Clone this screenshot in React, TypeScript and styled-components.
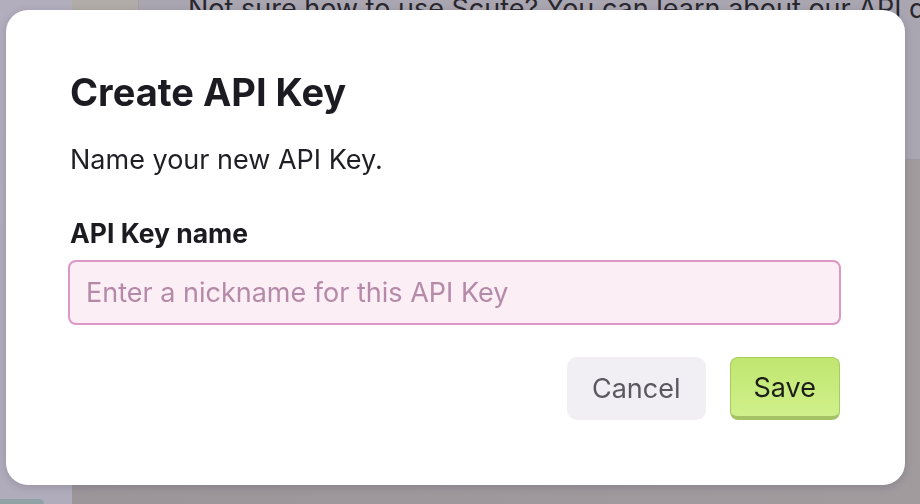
import React from 'react';
import styled, { createGlobalStyle } from 'styled-components';

const GlobalStyle = createGlobalStyle`
  html, body {
    margin: 0;
    padding: 0;
    height: 100%;
    overflow: hidden;
  }
  body {
    font-family: Inter, "Noto Sans", "Liberation Sans", sans-serif;
  }
  #root {
    height: 100%;
  }
`;

export default function App() {
  return (
    <>
      <GlobalStyle />
      <Page>
        <Sidebar>
          <SideChip />
        </Sidebar>
        <Main>
          <Header>
            <HeaderThumb />
            <HeaderText>
              Not sure how to use Scute? You can learn about our API docs here.
            </HeaderText>
          </Header>
          <Body />
        </Main>
      </Page>

      {/* Modal sits over the dimmed page */}
      <Modal role="dialog" aria-labelledby="create-key-title">
        <Title id="create-key-title">Create API Key</Title>
        <Description>Name your new API Key.</Description>
        <Label htmlFor="api-key-name">API Key name</Label>
        <Input id="api-key-name" placeholder="Enter a nickname for this API Key" />
        <Actions>
          <Button variant="secondary">Cancel</Button>
          <Button variant="primary">Save</Button>
        </Actions>
      </Modal>
    </>
  );
}

const Page = styled.div`
  display: grid;
  grid-template-columns: 72px 1fr;
  height: 100vh;
`;

const Sidebar = styled.aside`
  display: flex;
  flex-direction: column;
  justify-content: flex-end;
  background: linear-gradient(180deg, #b2aebd 0%, #b0acbb 100%);
`;

const SideChip = styled.div`
  width: 44px;
  height: 5px;
  background-color: #8fa2a6;
  border-top-right-radius: 10px;
`;

const Main = styled.main`
  display: flex;
  flex-direction: column;
  min-width: 0;
`;

const Header = styled.header`
  display: flex;
  height: 159px;
  flex-shrink: 0;
  overflow: hidden;
  background-color: #a9a6b2;
  border-bottom: 1px solid #9c99a6;
`;

const HeaderThumb = styled.div`
  width: 66px;
  flex-shrink: 0;
  background-color: #b2aca9;
  border-right: 1px solid #a29fa9;
`;

const HeaderText = styled.p`
  margin: -8px 0 0 49px;
  font-size: 27px;
  line-height: 34px;
  color: #29282e;
  white-space: nowrap;
`;

const Body = styled.div`
  flex: 1;
  background: linear-gradient(90deg, #9c959a 0%, #a19b9e 100%);
`;

const Modal = styled.div`
  position: fixed;
  left: 6px;
  top: 10px;
  width: 899px;
  height: 475px;
  box-sizing: border-box;
  display: flex;
  flex-direction: column;
  padding: 59px 64px 65px;
  background-color: #ffffff;
  border-radius: 22px;
  box-shadow: 0 2px 8px rgba(40, 30, 50, 0.18);
`;

const Title = styled.h2`
  margin: 0;
  font-size: 38px;
  line-height: 46px;
  font-weight: 700;
  color: #1c1b21;
`;

const Description = styled.p`
  margin: 28px 0 0;
  font-size: 27px;
  line-height: 34px;
  color: #1f1e24;
`;

const Label = styled.label`
  margin-top: 39px;
  font-size: 26.5px;
  line-height: 34px;
  font-weight: 700;
  color: #1c1b21;
`;

const Input = styled.input`
  margin: 10px 0 0 -2px;
  height: 65px;
  box-sizing: border-box;
  padding: 0 16px;
  font-family: inherit;
  font-size: 27px;
  color: #2a2230;
  background-color: #fbeef5;
  border: 2.5px solid #dc97c4;
  border-radius: 8px;
  outline: none;

  &::placeholder {
    color: #b58aa8;
  }
`;

const Actions = styled.div`
  display: flex;
  justify-content: flex-end;
  gap: 24px;
  margin-top: 32px;
`;

interface ButtonProps {
  variant: 'primary' | 'secondary';
}

const Button = styled.button<ButtonProps>`
  height: 63px;
  box-sizing: border-box;
  font-family: inherit;
  font-size: 27px;
  cursor: pointer;
  ${({ variant }) =>
    variant === 'primary'
      ? `
    padding: 0 23px;
    margin-right: 1px;
    color: #1d1e1a;
    background: linear-gradient(180deg, #c1e670 0%, #cff08b 100%);
    border: 1.5px solid #a8cb5e;
    border-bottom: 4px solid #a6c266;
    border-radius: 8px;
  `
      : `
    padding: 0 25px;
    color: #5a5861;
    background-color: #f1eff4;
    border: none;
    border-radius: 10px;
  `}
`;
